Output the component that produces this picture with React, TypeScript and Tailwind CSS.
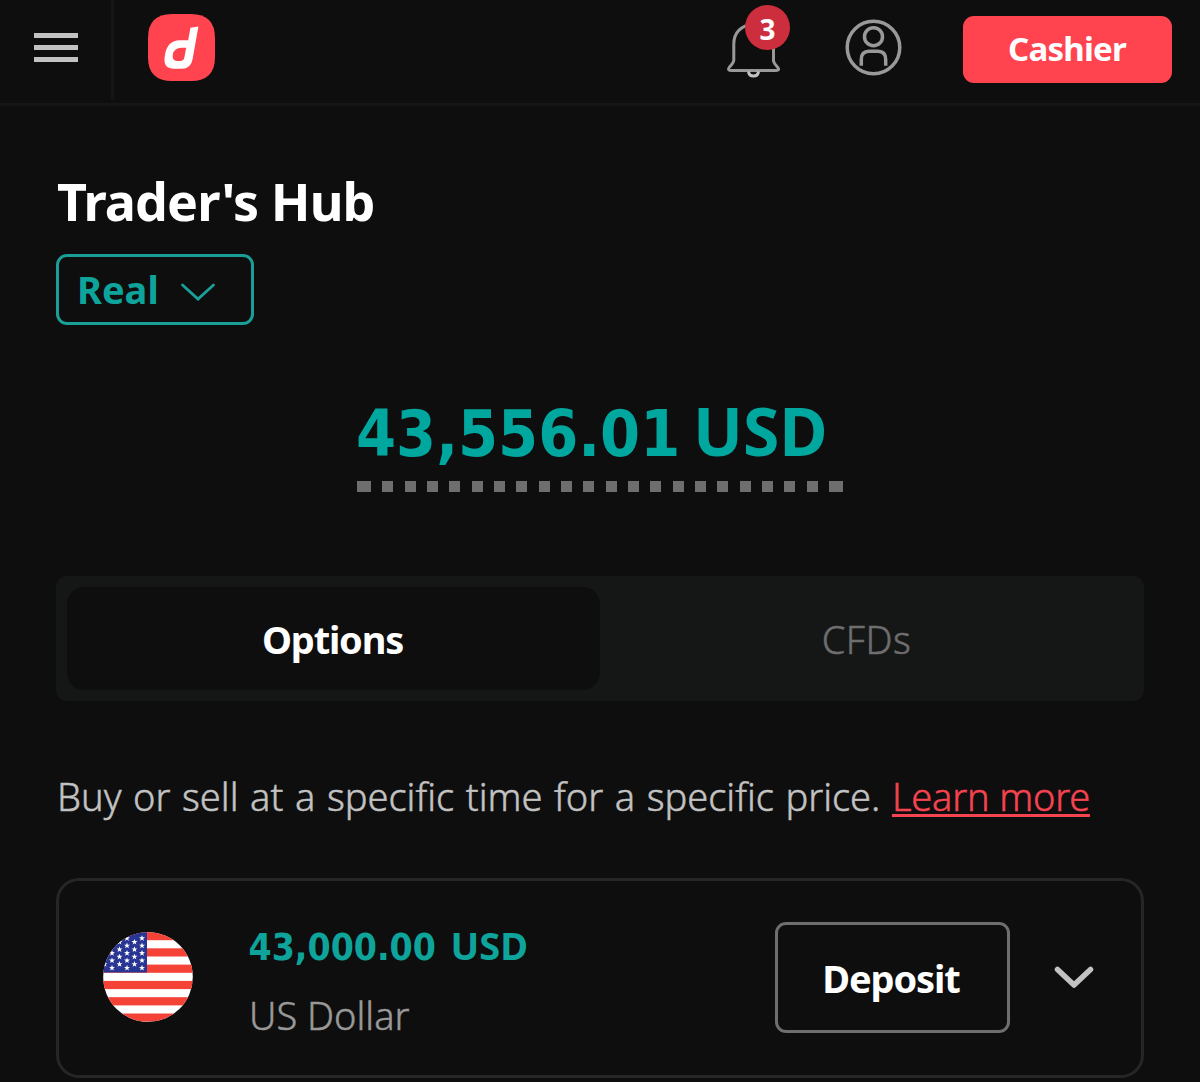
const star = "0,-3.1 0.8,-1 3,-0.95 1.2,0.4 1.9,2.6 0,1.3 -1.9,2.6 -1.2,0.4 -3,-0.95 -0.8,-1";

function Logo() {
  return (
    <svg width="67" height="67" viewBox="0 0 67 67" className="ml-[34px]">
      <path d="M0 24Q0 0 24 0H43Q67 0 67 24V43Q67 67 43 67H24Q0 67 0 43Z" fill="#ff444f" />
      <path
        fillRule="evenodd"
        fill="#fff"
        d="M42.4 13.8L50.4 12.5L44.6 45.2Q42.9 54.7 33.8 54.7H26Q15.8 54.7 16.5 44.5L16.9 41.5Q19 26.2 32 26.2H40.2ZM38.2 33.8H33.500Q26.2 33.8 24.8 40.5Q23.8 47 29 47H32Q35.500 47 36.3 43.8Z"
      />
    </svg>
  );
}

function Bell() {
  return (
    <div className="relative h-[74px] w-[63px]">
      <svg width="63" height="74" viewBox="727 5 63 74" fill="none">
        <path
          d="M773.500 48V61Q774 63.500 777 66.500Q780.500 70.500 776 70.500H731Q727 70.500 729.500 67Q733.800 62.500 733.800 60V44C733.800 33 741 24.500 754 24.500"
          stroke="#999" strokeWidth="3" />
        <path d="M748.500 71.500Q749 76 753.500 76Q758 76 758.500 71.500" stroke="#c2c2c2" strokeWidth="3" />
      </svg>
      <span className="absolute top-0 right-0 flex h-[45px] w-[45px] items-center justify-center rounded-full bg-[#cc2e3d] pt-[2px] text-[28px] leading-none font-bold text-white">3</span>
    </div>
  );
}

function Account() {
  return (
    <svg width="57" height="57" viewBox="0 0 57 57" fill="none" stroke="#999" strokeWidth="3.5" className="ml-[55px]">
      <circle cx="28.500" cy="28.500" r="26.300" />
      <circle cx="28.500" cy="17.700" r="9" />
      <path d="M16.300 46.800V40.500Q16.300 32.200 24 32.200H33Q40.700 32.200 40.700 40.500V46.800" />
    </svg>
  );
}

function Flag() {
  return (
    <svg width="90" height="90" viewBox="0 0 90 90" className="-mt-[2px]">
      <defs>
        <clipPath id="flag-round"><circle cx="45" cy="45" r="44.800" /></clipPath>
      </defs>
      <g clipPath="url(#flag-round)">
        <rect width="90" height="90" fill="#fff" />
        {[0, 16.3, 32.6, 48.9, 65.2, 81.5].map((y) => (
          <rect key={y} y={y} width="90" height="8.200" fill="#f44336" />
        ))}
        <rect width="44" height="40.500" fill="#283593" />
        {[39, 31.5, 24, 16.5, 9, 1.5].map((x, c) =>
          [0, 1, 2, 3, 4].filter((k) => c % 2 === 0 || k < 4).map((k) => (
            <polygon
              key={`${x}-${k}`}
              points={star}
              fill="#fff"
              transform={`translate(${x} ${(c % 2 === 0 ? 6.3 : 10) + k * 7.4})`}
            />
          ))
        )}
      </g>
    </svg>
  );
}

export default function App() {
  return (
    <div className="h-[1082px] w-[1200px] overflow-hidden bg-[#0e0e0e] font-['Noto_Sans','Open_Sans',sans-serif]">
      <header className="flex h-[106px] items-start border-b-[3px] border-[#151515]">
        <div className="flex h-[100px] w-[114px] items-center border-r-[3px] border-[#151515] pb-[5px] pl-[34px]">
          <div className="flex flex-col gap-[7px]">
            <span className="h-[5px] w-[44px] bg-[#c2c2c2]" />
            <span className="h-[5px] w-[44px] bg-[#c2c2c2]" />
            <span className="h-[5px] w-[44px] bg-[#c2c2c2]" />
          </div>
        </div>
        <div className="pt-[14px]"><Logo /></div>
        <div className="ml-auto pt-[5px]"><Bell /></div>
        <div className="pt-[19px]"><Account /></div>
        <button className="mt-[16px] mr-[28px] ml-[61px] flex h-[67px] w-[209px] items-center justify-center rounded-[11px] bg-[#ff444f] pr-px pb-[2px] text-[33px] font-bold tracking-[-0.75px] text-white">
          Cashier
        </button>
      </header>

      <main className="px-[56px]">
        <h1 className="mt-[65px] h-[61px] pl-px text-[52px] leading-[60px] font-bold tracking-[-0.9px] whitespace-nowrap text-white">Trader's Hub</h1>
        <button className="mt-[22px] flex h-[71px] w-[198px] items-center rounded-[11px] border-[3px] border-[#1a9f98] pl-[18px] text-[38px] font-bold text-[#0ea49c]">
          <span>Real</span>
          <svg width="36" height="20" viewBox="0 0 36 20" fill="none" className="mt-[4px] ml-[21px]">
            <path d="M2.500 3L18 17L33.500 3" stroke="#1a9f98" strokeWidth="2.800" strokeLinecap="round" />
          </svg>
        </button>

        <section className="mx-auto mt-[68px] w-[486px]">
          <div className="flex h-[78px] items-baseline text-[66px] leading-[75px] font-bold whitespace-nowrap text-[#00a79e]">
            <span className="ml-[-1px] w-[331px] font-['DejaVu_Sans_Condensed','DejaVu_Sans',sans-serif] text-[64px] [font-stretch:condensed]">43,556.01</span>
            <span className="ml-[6px]">USD</span>
          </div>
          <div className="mt-[10px] flex justify-between">
            {Array.from({ length: 22 }, (_, i) => (
              <span key={i} className={i === 0 || i === 21 ? "h-[11px] w-[14px] bg-[#6e6e6e]" : "h-[11px] w-[11px] bg-[#6e6e6e]"} />
            ))}
          </div>
        </section>

        <nav className="mt-[84px] flex h-[125px] rounded-[11px] bg-[#151717] p-[11px] text-[38px]">
          <button className="h-full w-[533px] rounded-[17px] bg-[#0e0e0e] pt-[2px] pr-[2px] font-bold tracking-[-1.2px] text-white">Options</button>
          <button className="h-full flex-1 pt-[2px] font-light tracking-[0.5px] text-[#6e6e6e] [-webkit-text-stroke:0.5px_#6e6e6e]">CFDs</button>
        </nav>

        <p className="mt-[70px] h-[52px] pl-px text-[38px] leading-[50px] font-light whitespace-nowrap text-[#c2c2c2]">
          <span className="[word-spacing:1.7px] [-webkit-text-stroke:0.5px_#c2c2c2]">Buy or sell at a specific time for a specific price. </span>
          <a className="tracking-[-0.2px] text-[#f54450] underline decoration-[3px] underline-offset-[3px] [-webkit-text-stroke:0.5px_#f54450] [text-decoration-skip-ink:none]">Learn more</a>
        </p>

        <section className="mt-[55px] flex h-[200px] items-center rounded-[23px] border-[3px] border-[#252626] pr-[47px] pl-[44px]">
          <Flag />
          <div className="ml-[56px] pt-[3px]">
            <div className="flex h-[70px] items-baseline text-[38px] leading-[70px] font-bold whitespace-nowrap text-[#0ea49c]">
              <span className="ml-[-0.5px] w-[189px] font-['DejaVu_Sans_Condensed','DejaVu_Sans',sans-serif] text-[37px] [font-stretch:condensed]">43,000.00</span>
              <span className="ml-[13px]">USD</span>
            </div>
            <div className="h-[70px] text-[38px] leading-[70px] font-light whitespace-nowrap text-[#999] [-webkit-text-stroke:0.5px_#999]">US Dollar</div>
          </div>
          <button className="mt-[-2px] ml-auto h-[111px] w-[235px] rounded-[11px] border-[3px] border-[#6e6e6e] pt-[3px] pr-[3px] text-[38px] font-bold tracking-[-1.1px] text-white">Deposit</button>
          <svg width="40" height="24" viewBox="0 0 40 24" fill="none" className="mt-[-1px] ml-[44px]">
            <path d="M3.500 3.500L20 19L36.500 3.500" stroke="#c2c2c2" strokeWidth="5.500" strokeLinecap="round" strokeLinejoin="round" />
          </svg>
        </section>
      </main>
    </div>
  );
}
